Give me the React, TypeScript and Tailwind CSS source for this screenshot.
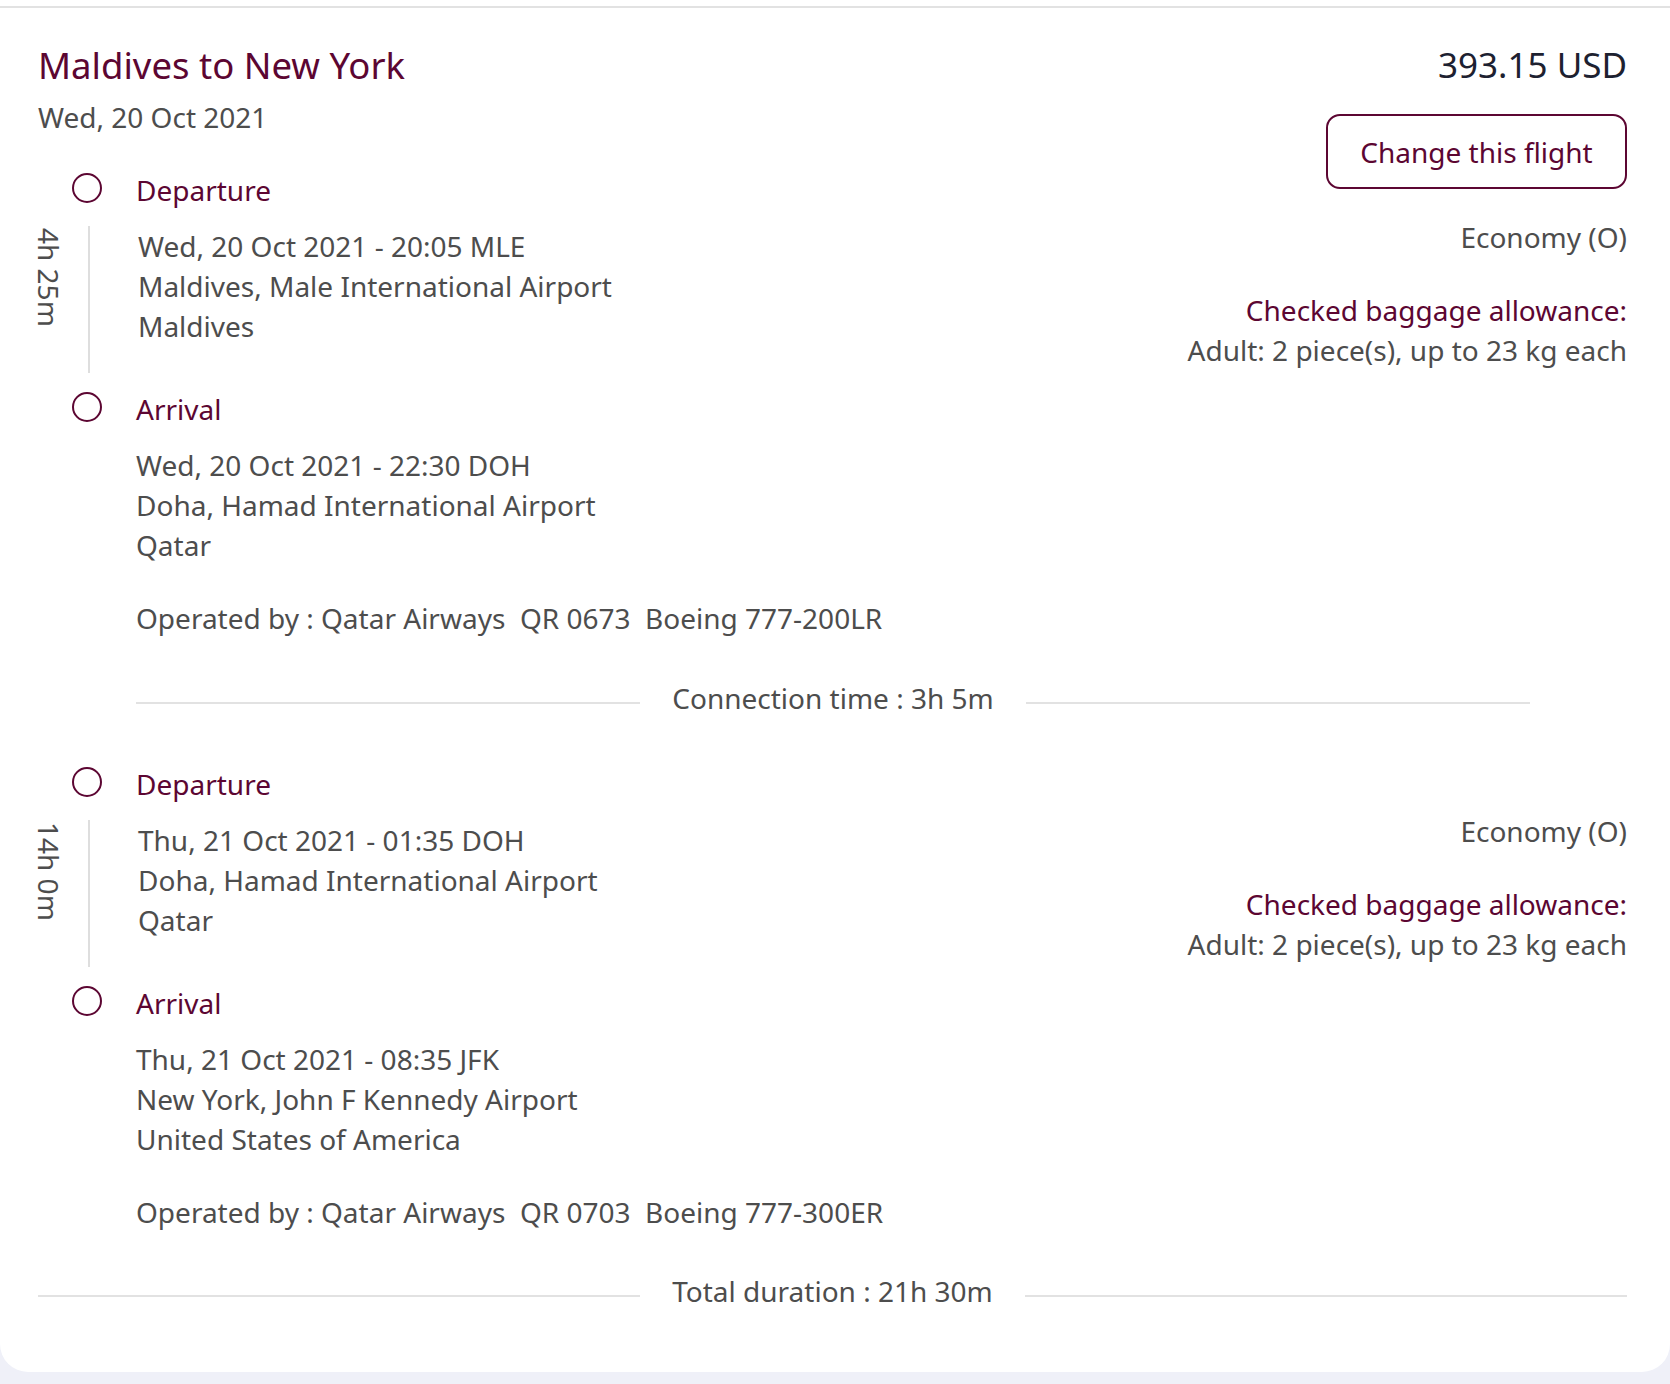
const MAROON = "text-[#5c0632]";

type Stop = {
  when: string;
  place: string;
  country: string;
};

type Segment = {
  duration: string;
  departure: Stop;
  arrival: Stop;
  operatedBy: string;
  cabin: string;
  baggage: string;
};

const SEGMENTS: Segment[] = [
  {
    duration: "4h 25m",
    departure: {
      when: "Wed, 20 Oct 2021 - 20:05 MLE",
      place: "Maldives, Male International Airport",
      country: "Maldives",
    },
    arrival: {
      when: "Wed, 20 Oct 2021 - 22:30 DOH",
      place: "Doha, Hamad International Airport",
      country: "Qatar",
    },
    operatedBy: "Operated by : Qatar Airways\u00a0\u00a0QR 0673\u00a0\u00a0Boeing 777-200LR",
    cabin: "Economy (O)",
    baggage: "Adult: 2 piece(s), up to 23 kg each",
  },
  {
    duration: "14h 0m",
    departure: {
      when: "Thu, 21 Oct 2021 - 01:35 DOH",
      place: "Doha, Hamad International Airport",
      country: "Qatar",
    },
    arrival: {
      when: "Thu, 21 Oct 2021 - 08:35 JFK",
      place: "New York, John F Kennedy Airport",
      country: "United States of America",
    },
    operatedBy: "Operated by : Qatar Airways\u00a0\u00a0QR 0703\u00a0\u00a0Boeing 777-300ER",
    cabin: "Economy (O)",
    baggage: "Adult: 2 piece(s), up to 23 kg each",
  },
];

const StopHeader = ({ label }: { label: string }) => (
  <div className="flex h-[40px] items-center">
    <span className="ml-[34px] -mt-1 h-[30px] w-[30px] shrink-0 rounded-full border-2 border-[#5c0632]" />
    <span className={`ml-[34px] ${MAROON}`}>{label}</span>
  </div>
);

const StopLines = ({ stop }: { stop: Stop }) => (
  <div>
    <div>{stop.when}</div>
    <div>{stop.place}</div>
    <div>{stop.country}</div>
  </div>
);

const Divider = ({ label, className }: { label: string; className?: string }) => (
  <div className={["flex h-[40px] items-center", className ?? ""].join(" ")}>
    <div className="mt-[10px] h-[2px] flex-1 bg-[#e2e2e2]" />
    <span className="px-[32px]">{label}</span>
    <div className="mt-[10px] h-[2px] flex-1 bg-[#e2e2e2]" />
  </div>
);

function FlightSegment({ segment }: { segment: Segment }) {
  return (
    <div className="flex">
      <div className="flex-1">
        <StopHeader label="Departure" />

        <div className="mt-4 flex">
          <span className="-ml-px w-[24px] self-start pt-[2px] leading-[24px] [writing-mode:vertical-rl]">
            {segment.duration}
          </span>
          <div className="ml-[27px] w-[2px] bg-[#dedede]" />
          <div className="ml-[48px] pb-[27px]">
            <StopLines stop={segment.departure} />
          </div>
        </div>

        <div className="mt-4">
          <StopHeader label="Arrival" />
        </div>

        <div className="mt-4 pl-[98px]">
          <StopLines stop={segment.arrival} />
          <div className="mt-[33px]">{segment.operatedBy}</div>
        </div>
      </div>

      <div className="shrink-0 pt-[47px] text-right">
        <div>{segment.cabin}</div>
        <div className={`mt-[33px] ${MAROON}`}>Checked baggage allowance:</div>
        <div>{segment.baggage}</div>
      </div>
    </div>
  );
}

export default function App() {
  return (
    <div
      className="min-h-[1384px] bg-[#eff0f8] text-[28px] leading-[40px] text-[#4d4d4d]"
      style={{ fontFamily: '"Noto Sans", "Open Sans", sans-serif' }}
    >
      <div className="rounded-b-[28px] bg-white pt-[6px]">
        <div className="h-[2px] bg-[#e2e2e2]" />

        <div className="pb-[61px] pl-[38px] pr-[43px] pt-[33px]">
          <header className="flex items-start justify-between">
            <div>
              <h1 className={`text-[36.5px] leading-[48px] ${MAROON}`}>
                Maldives to New York
              </h1>
              <p className="mt-2">Wed, 20 Oct 2021</p>
            </div>
            <div className="flex flex-col items-end">
              <div className="text-[35px] leading-[48px] text-[#1d2130]">393.15 USD</div>
              <button
                type="button"
                className={`mt-[25px] h-[75px] w-[301px] rounded-[14px] border-2 border-[#5c0632] text-[28px] ${MAROON}`}
              >
                Change this flight
              </button>
            </div>
          </header>

          <div className="-mt-[19px]">
            <FlightSegment segment={SEGMENTS[0]} />
            <Divider
              label="Connection time : 3h 5m"
              className="ml-[98px] mr-[97px] mt-[40px]"
            />
            <div className="mt-[46px]">
              <FlightSegment segment={SEGMENTS[1]} />
            </div>
            <Divider label="Total duration : 21h 30m" className="mt-[39px]" />
          </div>
        </div>
      </div>
    </div>
  );
}
